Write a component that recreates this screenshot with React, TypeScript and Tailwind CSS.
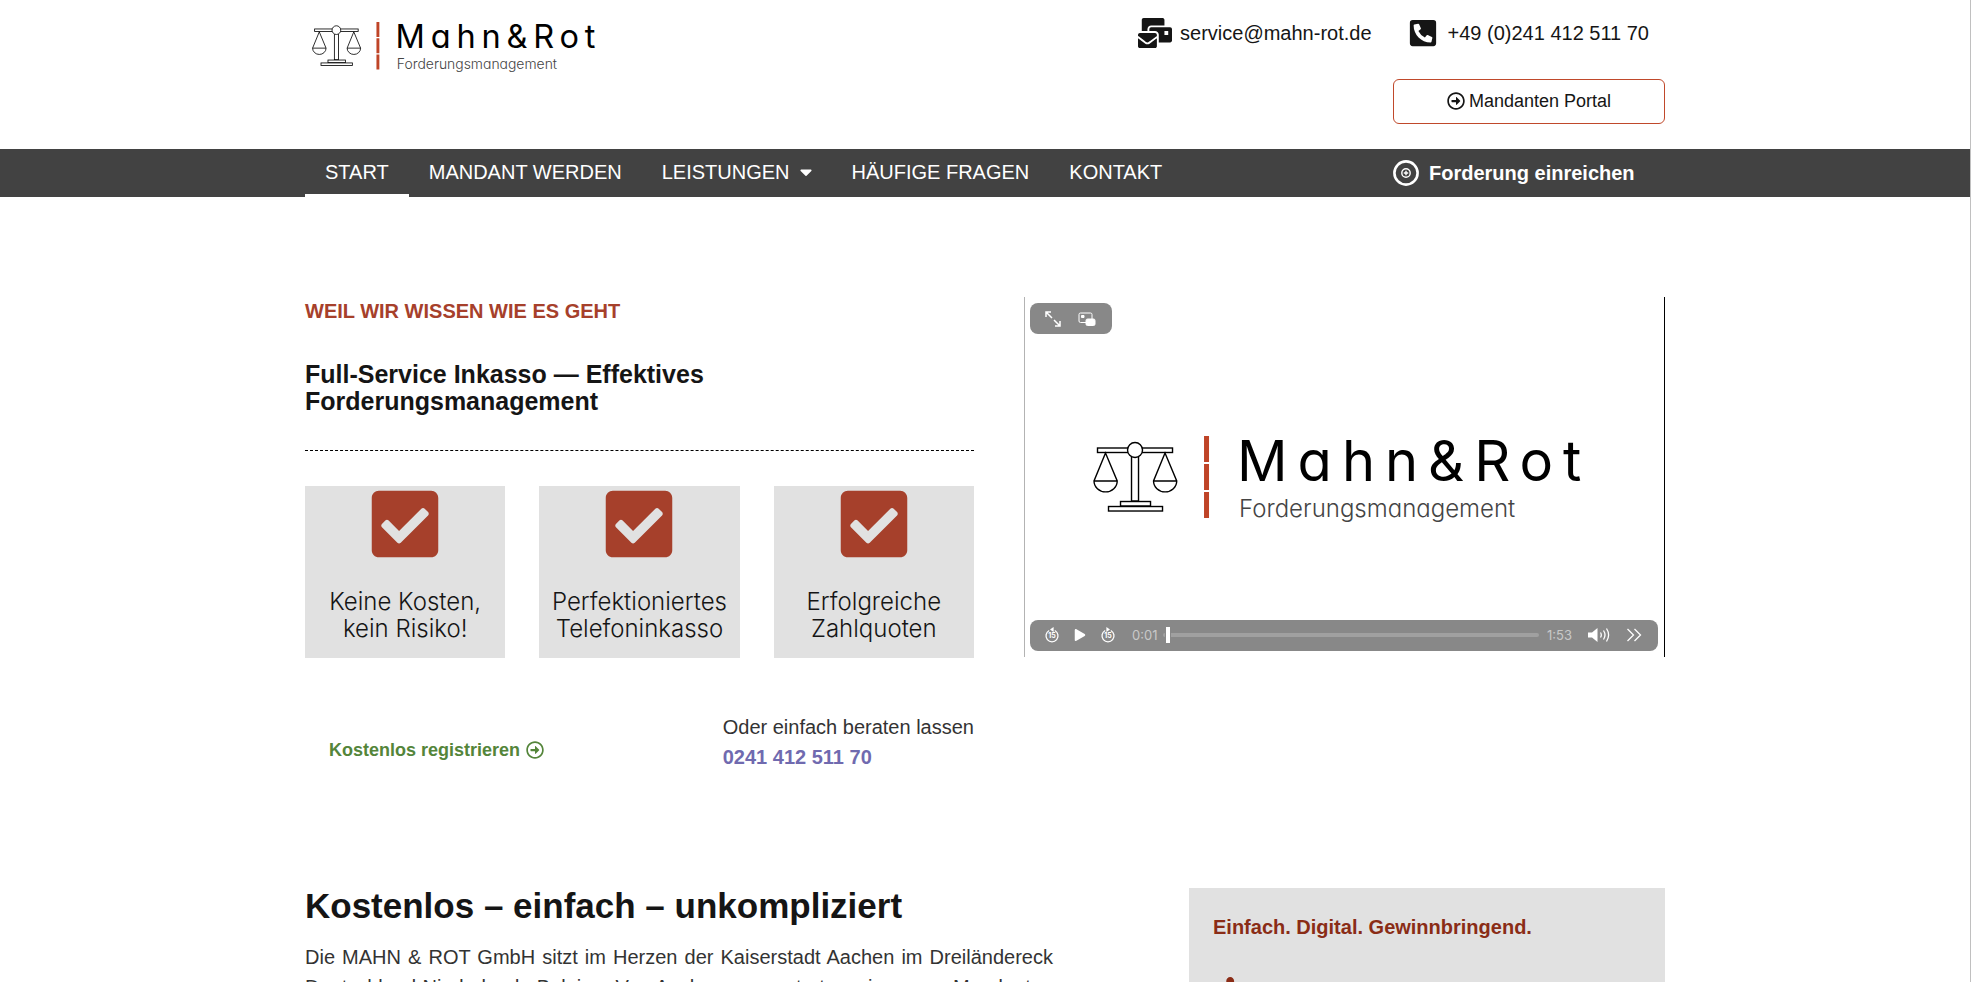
import { FaCaretDown, FaCheckSquare, FaHandPointer, FaMailBulk, FaPhoneSquareAlt, FaPlay, FaRegArrowAltCircleRight } from 'react-icons/fa'

const navItems = [
  { label: 'START', active: true },
  { label: 'MANDANT WERDEN' },
  { label: 'LEISTUNGEN', dropdown: true },
  { label: 'HÄUFIGE FRAGEN' },
  { label: 'KONTAKT' },
]

const benefits = [
  ['Keine Kosten,', 'kein Risiko!'],
  ['Perfektioniertes', 'Telefoninkasso'],
  ['Erfolgreiche', 'Zahlquoten'],
]

function Logo({ className }: { className: string }) {
  return (
    <svg viewBox="0 0 496 88" className={`overflow-visible ${className}`} role="img" aria-label="Mahn & Rot Forderungsmanagement">
      <g fill="white" stroke="black" strokeWidth="1.4">
        <rect x="4.5" y="12" width="75" height="4.5" />
        <rect x="38.5" y="16" width="7" height="49" />
        <circle cx="42" cy="14" r="7.5" />
        <rect x="27.5" y="65.5" width="30" height="4.5" />
        <rect x="15.5" y="70.5" width="54" height="4.5" />
        <path d="M12.5 17 1 45a11.5 10.8 0 0 0 23.2 0ZM1 45h23.2" />
        <path d="M72 17 60.5 45a11.5 10.8 0 0 0 23.2 0ZM60.5 45h23.2" />
      </g>
      <path d="M113.5 0v26M113.5 28v26M113.5 56v26" stroke="#bf4427" strokeWidth="5" />
      <text x="144" y="45" className="font-[Inter] text-[56px] tracking-[10px] [font-feature-settings:'cv11']">
        Mahn&amp;Rot
      </text>
      <text x="146" y="81" fill="#444" className="font-[Inter] text-[24px] font-light [font-feature-settings:'cv11']">
        Forderungsmanagement
      </text>
    </svg>
  )
}

function SkipIcon({ back }: { back?: boolean }) {
  return (
    <svg viewBox="0 0 16 16" className="size-4" fill="none" stroke="currentColor" strokeWidth="1.3">
      <path d={back ? 'M5.2 3.5A6 6 0 1 0 10.8 3.5' : 'M10.8 3.5A6 6 0 1 1 5.2 3.5'} />
      <path d={back ? 'M9.6 0v5L6 2.5Z' : 'M6.4 0v5L10 2.5Z'} fill="currentColor" stroke="none" />
      <text x="8" y="11.4" textAnchor="middle" fill="currentColor" stroke="none" className="font-[Inter] text-[7px] font-bold">
        15
      </text>
    </svg>
  )
}

function VideoPlayer() {
  return (
    <section aria-label="Video" className="flex h-[360px] flex-col justify-between border-l border-l-[#b3b3b3] border-r border-r-black py-1.5 pl-[5px] pr-1.5">
      <div className="flex h-[31px] w-[82px] items-center justify-between rounded-lg bg-[#888] pl-[15px] pr-4 text-white">
        <button aria-label="Vollbild">
          <svg viewBox="0 0 16 16" className="size-4" fill="none" stroke="currentColor" strokeWidth="1.5">
            <path d="M1 6V1h5M1 1l6 6M15 10v5h-5M15 15 9 9" />
          </svg>
        </button>
        <button aria-label="Bild in Bild">
          <svg viewBox="0 0 18 16" className="h-4 w-[18px]" fill="none" stroke="currentColor">
            <rect x="1" y="2" width="13" height="9.5" rx="1.5" />
            <path d="M3.5 4.5h2.5v2H3.5z" fill="currentColor" />
            <rect x="8" y="8" width="9" height="6.5" rx="1.5" fill="currentColor" />
          </svg>
        </button>
      </div>
      <Logo className="ml-[10%] mt-1.5 w-[79%]" />
      <div className="flex h-[31px] items-center rounded-lg bg-[#888] pl-3.5 pr-4 text-white">
        <button aria-label="15 Sekunden zurück"><SkipIcon back /></button>
        <button aria-label="Abspielen" className="ml-3.5"><FaPlay className="size-3" /></button>
        <button aria-label="15 Sekunden vor" className="ml-3.5"><SkipIcon /></button>
        <span className="ml-4 font-[Inter] text-[13px] text-[#c8c8c8]">0:01</span>
        <div className="relative ml-1.5 h-1 flex-1 rounded-full bg-[#a0a0a0]">
          <span className="absolute -top-1.5 left-0.5 h-4 w-1.5 border-x border-[#888] bg-white" />
        </div>
        <span className="ml-2 font-[Inter] text-[13px] text-[#c8c8c8]">1:53</span>
        <button aria-label="Ton" className="ml-4">
          <svg viewBox="0 0 22 16" className="h-4 w-[22px]" fill="none" stroke="currentColor" strokeWidth="1.3">
            <path d="M0 5.5h4L9.5 1v14L4 10.5H0z" fill="currentColor" stroke="none" />
            <path d="M12.5 5.5q1.6 2.5 0 5M15.5 3.5q3 4.5 0 9M18.5 1.5q4.2 6.5 0 13" />
          </svg>
        </button>
        <button aria-label="Mehr" className="ml-4">
          <svg viewBox="0 0 16 16" className="size-4" fill="none" stroke="currentColor" strokeWidth="1.3">
            <path d="m1.5 2 6 6-6 6M8.5 2l6 6-6 6" />
          </svg>
        </button>
      </div>
    </section>
  )
}

export default function App() {
  return (
    <div className="h-screen overflow-hidden border-r border-[#c0c0c0] bg-white font-['Liberation_Sans',Arial,sans-serif] text-xl text-[#151515]">
      <header>
        <div className="mx-auto flex h-[149px] max-w-[1360px] justify-between">
          <a href="#start" className="mt-[22px] ml-[7px]">
            <Logo className="w-[288px]" />
          </a>
          <div className="flex flex-col items-end">
            <div className="mt-[17px] mr-4 flex h-8 items-center">
              <a href="mailto:service@mahn-rot.de" className="flex items-center gap-2">
                <FaMailBulk className="size-[34px]" />
                service@mahn-rot.de
              </a>
              <a href="tel:+4924141251170" className="ml-9 flex items-center gap-2.5">
                <FaPhoneSquareAlt className="size-[30px]" />
                +49 (0)241 412 511 70
              </a>
            </div>
            <a href="#portal" className="mt-[30px] flex h-[45px] w-[272px] items-center justify-center gap-1 rounded-md border border-[#c0492b] pb-0.5 text-lg">
              <FaRegArrowAltCircleRight />
              Mandanten Portal
            </a>
          </div>
        </div>
        <nav className="bg-[#424242] text-white">
          <div className="mx-auto flex h-12 max-w-[1360px]">
            {navItems.map((item) => (
              <a
                key={item.label}
                href="#"
                className={`flex items-center gap-2.5 border-b-[3px] px-5 ${item.active ? 'border-white' : 'border-transparent'}`}
              >
                {item.label}
                {item.dropdown && <FaCaretDown className="h-5 w-3" />}
              </a>
            ))}
            <a href="#einreichen" className="ml-auto flex w-[272px] items-center gap-2.5 font-bold">
              <svg viewBox="0 0 26 26" className="size-[26px]" fill="none" stroke="currentColor">
                <circle cx="13" cy="13" r="11.6" strokeWidth="2.6" />
                <circle cx="13" cy="13" r="4.2" strokeWidth="1.4" />
                <path d="M13 10.8v4.4M10.8 13h4.4" strokeWidth="1.4" />
              </svg>
              Forderung einreichen
            </a>
          </div>
        </nav>
      </header>

      <main className="mx-auto max-w-[1360px]">
        <div className="mt-[100px] grid grid-cols-[669px_1fr] gap-[50px]">
          <section>
            <h3 className="font-bold leading-7 text-[#a6402b]">WEIL WIR WISSEN WIE ES GEHT</h3>
            <h2 className="mt-9 text-[25px] font-bold leading-[27px]">
              Full-Service Inkasso — Effektives
              <br />
              Forderungsmanagement
            </h2>
            <hr className="mt-[35px] border-dashed border-black" />
            <div className="mt-[35px] grid grid-cols-3 gap-[34px]">
              {benefits.map(([first, second]) => (
                <div key={first} className="flex h-[172px] flex-col items-center bg-[#e1e1e1] text-center">
                  <FaCheckSquare className="size-[76px] text-[#a6402b]" />
                  <p className="mt-[26px] font-[Inter] text-2xl font-light leading-[27px]">
                    {first}
                    <br />
                    {second}
                  </p>
                </div>
              ))}
            </div>
            <div className="mt-[54px] flex h-[60px] items-end justify-between">
              <a href="#registrieren" className="mb-2 ml-6 flex items-center gap-1.5 text-lg font-bold text-[#54853a]">
                Kostenlos registrieren
                <FaRegArrowAltCircleRight />
              </a>
              <p className="leading-[30px] text-[#333]">
                Oder einfach beraten lassen
                <br />
                <a href="tel:024141251170" className="font-bold text-[#706aaf]">0241 412 511 70</a>
              </p>
            </div>
          </section>
          <VideoPlayer />
        </div>

        <div className="mt-[116px] flex items-start justify-between">
          <section className="w-[748px]">
            <h1 className="text-[35px] font-bold leading-9">Kostenlos – einfach – unkompliziert</h1>
            <p className="mt-[18px] text-justify leading-[30px] text-[#333]">
              Die MAHN &amp; ROT GmbH sitzt im Herzen der Kaiserstadt Aachen im Dreiländereck Deutschland Niederlande
              Belgien. Von Aachen aus vertreten wir unsere Mandanten in ganz Deutschland.
            </p>
          </section>
          <aside className="h-[200px] w-[476px] bg-[#e1e1e1] px-6 pt-6 text-[#8a2c16]">
            <h3 className="font-bold leading-[30px]">Einfach. Digital. Gewinnbringend.</h3>
            <FaHandPointer className="mt-[35px] size-[50px]" />
          </aside>
        </div>
      </main>
    </div>
  )
}
